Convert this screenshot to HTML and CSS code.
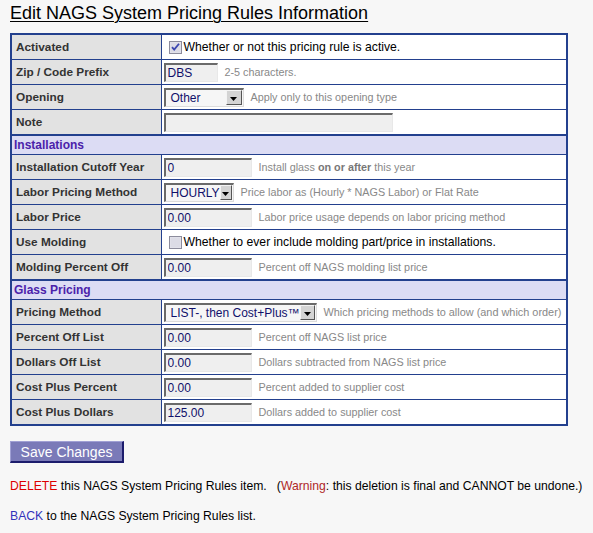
FILE: index.html
```html
<!DOCTYPE html>
<html>
<head>
<meta charset="utf-8">
<title>Edit NAGS System Pricing Rules Information</title>
<link rel="stylesheet" href="styles.css">
</head>
<body>
<div class="page">
  <h1 class="title">Edit NAGS System Pricing Rules Information</h1>
  <table class="form">
    <colgroup><col class="c-label"><col class="c-val"></colgroup>
    <tr>
      <th>Activated</th>
      <td><div class="val">
        <span class="cb"><svg width="13" height="13" viewBox="0 0 13 13"><rect x="0.5" y="0.5" width="12" height="12" fill="#e6e6ee" stroke="#8c8c9c"/><rect x="1.5" y="1.5" width="10" height="10" fill="#dcdce6"/><path d="M3 6.2 L5.2 8.6 L10 2.8" fill="none" stroke="#3b46b0" stroke-width="1.8"/></svg></span>
        <span class="cbtext">Whether or not this pricing rule is active.</span>
      </div></td>
    </tr>
    <tr>
      <th>Zip / Code Prefix</th>
      <td><div class="val"><input class="txt w-zip" type="text" value="DBS"><span class="hint">2-5 characters.</span></div></td>
    </tr>
    <tr>
      <th>Opening</th>
      <td><div class="val">
        <span class="sel w-open"><span class="selv">Other</span><span class="selbtn"><svg width="7" height="4" viewBox="0 0 7 4"><path d="M0 0 H7 L3.5 4 Z" fill="#000"/></svg></span></span>
        <span class="hint">Apply only to this opening type</span>
      </div></td>
    </tr>
    <tr>
      <th>Note</th>
      <td><div class="val"><input class="txt w-note" type="text" value=""></div></td>
    </tr>
    <tr class="sect"><td colspan="2">Installations</td></tr>
    <tr>
      <th>Installation Cutoff Year</th>
      <td><div class="val"><input class="txt w-num" type="text" value="0"><span class="hint">Install glass <b>on or after</b> this year</span></div></td>
    </tr>
    <tr>
      <th>Labor Pricing Method</th>
      <td><div class="val">
        <span class="sel w-hourly"><span class="selv">HOURLY</span><span class="selbtn"><svg width="7" height="4" viewBox="0 0 7 4"><path d="M0 0 H7 L3.5 4 Z" fill="#000"/></svg></span></span>
        <span class="hint">Price labor as (Hourly * NAGS Labor) or Flat Rate</span>
      </div></td>
    </tr>
    <tr>
      <th>Labor Price</th>
      <td><div class="val"><input class="txt w-num" type="text" value="0.00"><span class="hint">Labor price usage depends on labor pricing method</span></div></td>
    </tr>
    <tr>
      <th>Use Molding</th>
      <td><div class="val">
        <span class="cb"><svg width="13" height="13" viewBox="0 0 13 13"><rect x="0.5" y="0.5" width="12" height="12" fill="#e6e6ee" stroke="#8c8c9c"/><rect x="1.5" y="1.5" width="10" height="10" fill="#dcdce6"/></svg></span>
        <span class="cbtext">Whether to ever include molding part/price in installations.</span>
      </div></td>
    </tr>
    <tr>
      <th>Molding Percent Off</th>
      <td><div class="val"><input class="txt w-num" type="text" value="0.00"><span class="hint">Percent off NAGS molding list price</span></div></td>
    </tr>
    <tr class="sect"><td colspan="2">Glass Pricing</td></tr>
    <tr>
      <th>Pricing Method</th>
      <td><div class="val">
        <span class="sel w-method"><span class="selv">LIST-, then Cost+Plus™</span><span class="selbtn"><svg width="7" height="4" viewBox="0 0 7 4"><path d="M0 0 H7 L3.5 4 Z" fill="#000"/></svg></span></span>
        <span class="hint wide">Which pricing methods to allow (and which order)</span>
      </div></td>
    </tr>
    <tr>
      <th>Percent Off List</th>
      <td><div class="val"><input class="txt w-num" type="text" value="0.00"><span class="hint">Percent off NAGS list price</span></div></td>
    </tr>
    <tr>
      <th>Dollars Off List</th>
      <td><div class="val"><input class="txt w-num" type="text" value="0.00"><span class="hint">Dollars subtracted from NAGS list price</span></div></td>
    </tr>
    <tr>
      <th>Cost Plus Percent</th>
      <td><div class="val"><input class="txt w-num" type="text" value="0.00"><span class="hint">Percent added to supplier cost</span></div></td>
    </tr>
    <tr>
      <th>Cost Plus Dollars</th>
      <td><div class="val"><input class="txt w-num" type="text" value="125.00"><span class="hint">Dollars added to supplier cost</span></div></td>
    </tr>
  </table>
  <button class="save" type="button">Save Changes</button>
  <p class="line del"><a class="red" href="#">DELETE</a> this NAGS System Pricing Rules item. &nbsp; (<span class="warn">Warning</span>: this deletion is final and CANNOT be undone.)</p>
  <p class="line back"><a class="blue" href="#">BACK</a> to the NAGS System Pricing Rules list.</p>
</div>
</body>
</html>
```

FILE: styles.css
```css
html, body {
  margin: 0;
  padding: 0;
  background: #f7f7f7;
}
body {
  font-family: "Liberation Sans", Arial, sans-serif;
  color: #000;
}
.page {
  padding: 0 0 0 10px;
}
.title {
  margin: 0;
  padding-top: 2px;
  font-size: 18px;
  line-height: 22px;
  font-weight: normal;
  text-decoration: underline;
  text-underline-offset: 2px;
  text-decoration-thickness: 1px;
}
.form {
  margin-top: 9px;
  width: 558px;
  border-collapse: collapse;
  border: 2px solid #23408e;
  table-layout: fixed;
}
.c-label { width: 150px; }
.form th, .form td {
  border: 1px solid #23408e;
  height: 24px;
  padding: 0;
  vertical-align: middle;
}
.form th {
  background: #e2e2e2;
  color: #333;
  font-size: 11.8px;
  font-weight: bold;
  text-align: left;
  padding-left: 4px;
  white-space: nowrap;
}
.form td {
  background: #fff;
  padding-left: 2px;
}
.form tr.sect td {
  background: #dcdcf4;
  color: #4b22aa;
  font-size: 12px;
  font-weight: bold;
  height: 18px;
  border-top: 2px solid #23408e;
  padding-left: 2px;
}
.val {
  display: flex;
  align-items: center;
  gap: 7px;
  white-space: nowrap;
  overflow: hidden;
}
.hint {
  font-size: 10.8px;
  color: #888;
}
.hint.wide { font-size: 10.9px; }
.hint b { color: #777; }
.txt {
  box-sizing: border-box;
  height: 19px;
  margin: 0;
  padding: 0 2px;
  font-family: "Liberation Sans", Arial, sans-serif;
  font-size: 12px;
  color: #10106a;
  background: #efefef;
  border-style: solid;
  border-width: 2px 1px 1px 2px;
  border-color: #6a6a6a #e8e8e8 #e8e8e8 #6a6a6a;
  outline: none;
}
.w-zip { width: 54px; }
.w-num { width: 88px; }
.w-note { width: 229px; }
.sel {
  box-sizing: border-box;
  display: inline-flex;
  flex: none;
  align-items: center;
  justify-content: space-between;
  height: 19px;
  background: #f6f6f6;
  border-style: solid;
  border-width: 2px 1px 1px 2px;
  border-color: #6a6a6a #dcdcdc #dcdcdc #6a6a6a;
  font-size: 12px;
  color: #10106a;
  padding-left: 5px;
}
.w-open { width: 80px; }
.w-hourly { width: 70px; }
.w-method { width: 153px; }
.selbtn {
  box-sizing: border-box;
  width: 16px;
  height: 15px;
  margin-right: 1px;
  background: #d4d4d4;
  border-style: solid;
  border-width: 1px;
  border-color: #f4f4f4 #555 #555 #f4f4f4;
  display: flex;
  align-items: flex-end;
  justify-content: center;
  padding-bottom: 3px;
}
.selbtn svg { display: block; }
.cb {
  display: flex;
  margin-left: 5px;
}
.cb svg { display: block; }
.cbtext {
  font-size: 12.2px;
  margin-left: -5px;
}
.save {
  display: block;
  margin-top: 15px;
  width: 114px;
  height: 22px;
  padding: 0;
  box-sizing: border-box;
  font-family: "Liberation Sans", Arial, sans-serif;
  font-size: 14px;
  color: #fff;
  background: #7a7ab8;
  border-style: solid;
  border-width: 1px 2px 2px 1px;
  border-color: #a0a0d4 #1c1c6c #1c1c6c #a0a0d4;
}
.line {
  margin: 0;
  font-size: 12.2px;
  line-height: 14px;
  white-space: nowrap;
}
.del { margin-top: 16px; }
.back { margin-top: 16px; }
.red { color: #d00; text-decoration: none; }
.warn { color: #b02828; }
.blue { color: #3333bb; text-decoration: none; }
```
